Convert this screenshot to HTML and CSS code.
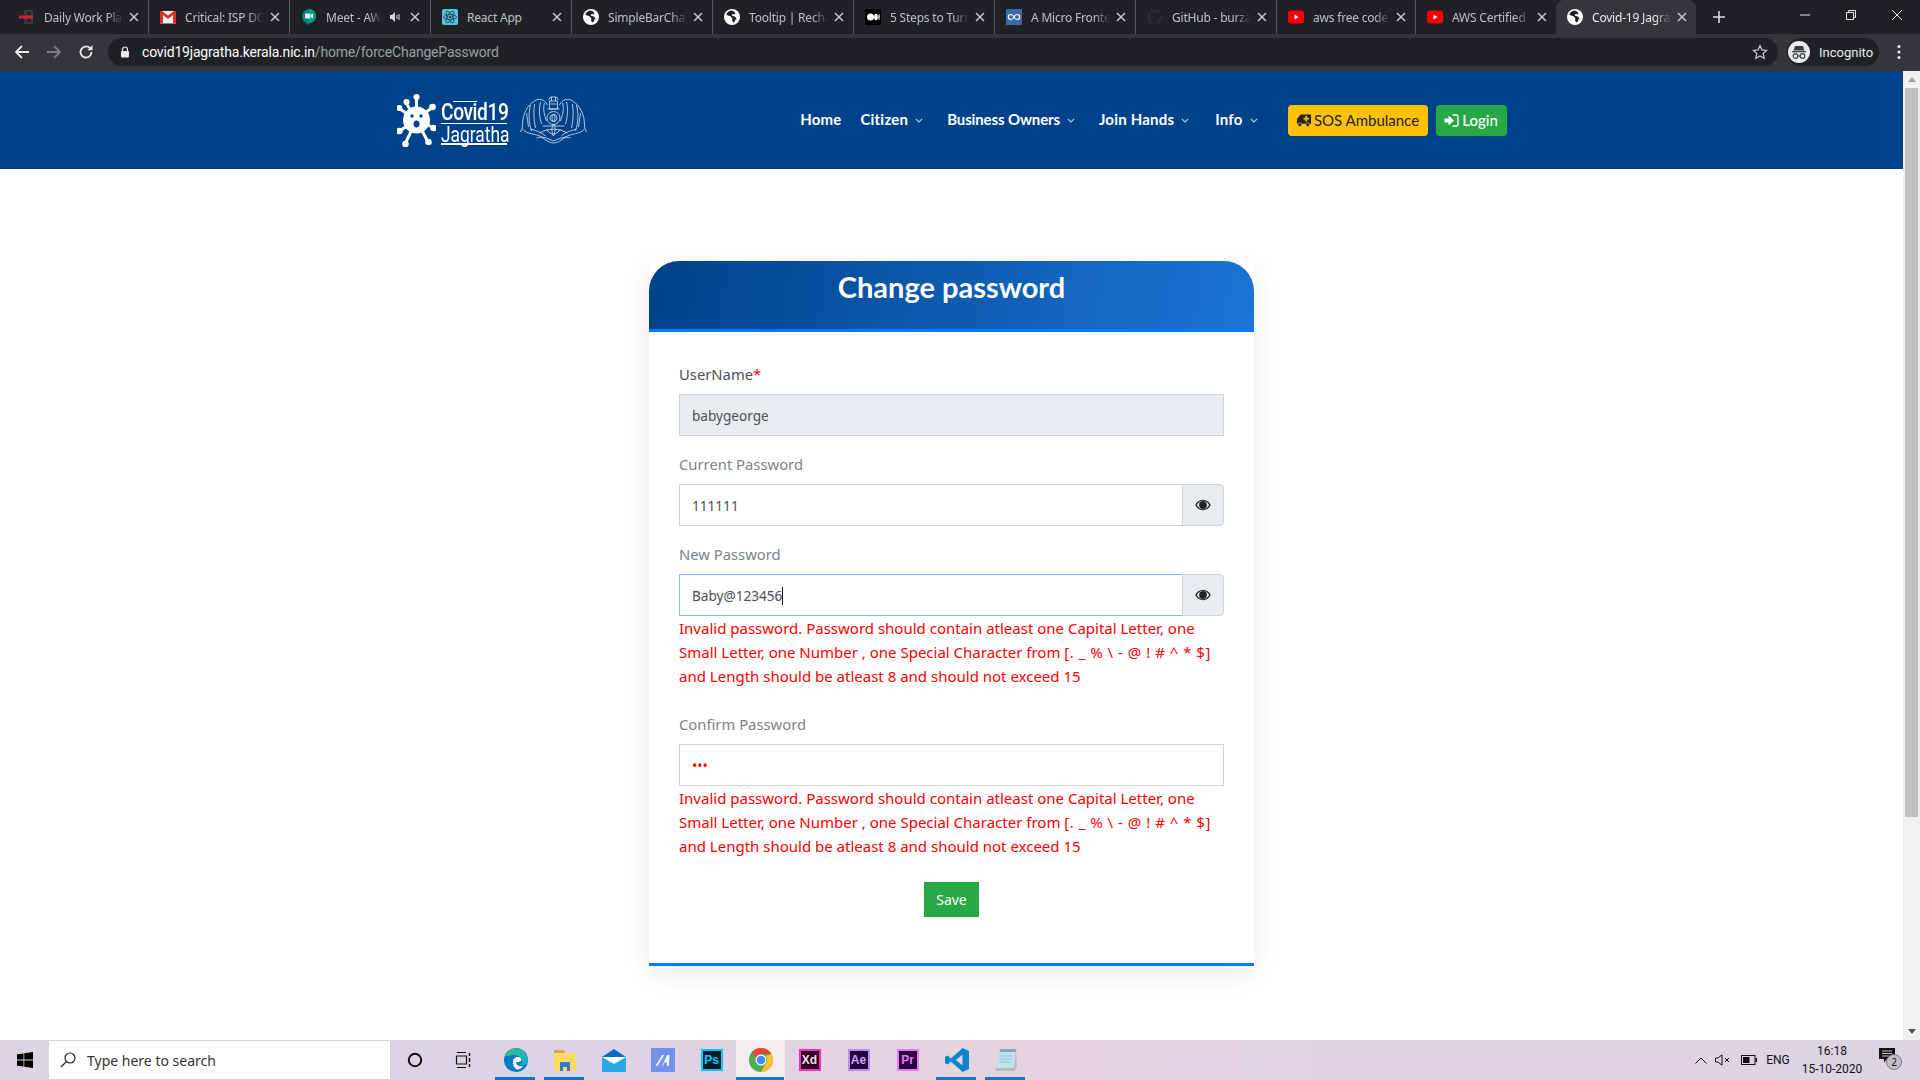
FILE: index.html
```html
<!DOCTYPE html>
<html lang="en">
<head>
<meta charset="utf-8">
<title>Covid-19 Jagratha</title>
<link rel="stylesheet" href="styles.css">
</head>
<body>
<svg class="defs" width="0" height="0" aria-hidden="true">
  <symbol id="x" viewBox="0 0 10 10"><path d="M1 1l8 8M9 1l-8 8" stroke="currentColor" stroke-width="1.5" fill="none"/></symbol>
  <symbol id="globe" viewBox="0 0 16 16"><circle cx="8" cy="8" r="8" fill="#fff"/><path d="M7 1.5C5 2 3 3.5 2.2 5.5l2.3 1.3 2 .2.7 1.6 1.3.4-.5 2 1 2.6 1.4-.6 1.2-2.4 1-1.2-1.8-2-2.6-.6-.6-1 1.3-.8 1.5.5 1-1.2C10.5 2.3 8.800 1.500 7 1.500z" fill="#202124"/></symbol>
  <symbol id="yt" viewBox="0 0 16 16"><rect y="1.500" width="16" height="13" rx="3" fill="#f00"/><path d="M6.500 5.500v5l4-2.500z" fill="#fff"/></symbol>
  <symbol id="eye" viewBox="0 0 16 12"><path d="M8 .8C4.500.8 1.600 3 .3 6c1.300 3 4.200 5.200 7.700 5.200S14.400 9 15.700 6C14.400 3 11.500.8 8 .8zm0 9.400C5.300 10.200 3.100 8.600 1.900 6 3.100 3.400 5.300 1.800 8 1.800s4.900 1.600 6.100 4.200c-1.200 2.600-3.400 4.200-6.100 4.200z" fill="#212529"/><circle cx="8" cy="6" r="3.900" fill="#212529"/></symbol>
</svg>

<div class="tabstrip">
  <div class="tab"><svg class="fav" viewBox="0 0 16 16"><path d="M5 1h9v14H5zM8 3v3h4V3zM8 10v3h4v-3z" fill="#3a3a3c"/><rect y="6.500" width="14" height="3" fill="#d3232a"/></svg><span class="tab-title">Daily Work Plan</span><svg class="tab-x"><use href="#x"/></svg></div>
  <div class="tab"><svg class="fav" viewBox="0 0 16 16"><rect y="2" width="16" height="12.500" fill="#eee"/><path d="M0 2v12.500h3V6l5 4 5-4v8.500h3V2h-2L8 6.500 2 2z" fill="#d93025"/></svg><span class="tab-title">Critical: ISP DOWN</span><svg class="tab-x"><use href="#x"/></svg></div>
  <div class="tab"><svg class="fav" viewBox="0 0 16 16"><path d="M8 0a7 7 0 0 0-7 7c0 4 3 7 7 9v-2a7 7 0 0 0 0-14z" fill="#00897b"/><path d="M8 0a7 7 0 0 1 0 14z" fill="#00a08f"/><rect x="4" y="4.500" width="5.500" height="5" rx="1" fill="#e8f5f3"/><path d="M10 6l2-1.500v5L10 8z" fill="#e8f5f3"/></svg><span class="tab-title tab-short">Meet - AWS</span><svg class="tab-audio" viewBox="0 0 12 12"><path d="M1 4h2l3-3v10L3 8H1z" fill="#dadce0"/><path d="M8 4v4M10 3v6" stroke="#dadce0" stroke-width="1"/></svg><svg class="tab-x tab-x-tight"><use href="#x"/></svg></div>
  <div class="tab"><svg class="fav" viewBox="0 0 16 16"><rect width="16" height="16" rx="2" fill="#59c4dc"/><g fill="none" stroke="#173f4c" stroke-width=".8"><ellipse cx="8" cy="8" rx="6.500" ry="2.600"/><ellipse cx="8" cy="8" rx="6.500" ry="2.600" transform="rotate(60 8 8)"/><ellipse cx="8" cy="8" rx="6.500" ry="2.600" transform="rotate(120 8 8)"/></g><circle cx="8" cy="8" r="1.300" fill="#173f4c"/></svg><span class="tab-title tab-nofade">React App</span><svg class="tab-x"><use href="#x"/></svg></div>
  <div class="tab"><svg class="fav"><use href="#globe"/></svg><span class="tab-title">SimpleBarChart</span><svg class="tab-x"><use href="#x"/></svg></div>
  <div class="tab"><svg class="fav"><use href="#globe"/></svg><span class="tab-title">Tooltip | Recharts</span><svg class="tab-x"><use href="#x"/></svg></div>
  <div class="tab"><svg class="fav" viewBox="0 0 16 16"><rect width="16" height="16" rx="1" fill="#000"/><circle cx="5.500" cy="8" r="3.500" fill="#fff"/><ellipse cx="11" cy="8" rx="1.800" ry="3.300" fill="#fff"/><ellipse cx="14" cy="8" rx=".7" ry="3" fill="#fff"/></svg><span class="tab-title">5 Steps to Turn</span><svg class="tab-x"><use href="#x"/></svg></div>
  <div class="tab"><svg class="fav" viewBox="0 0 16 16"><rect width="16" height="16" fill="#3b6aa8"/><path d="M8 8C7 6 6 5.500 4.800 5.500a2.500 2.500 0 0 0 0 5C6 10.500 7 10 8 8c1-2 2-2.500 3.200-2.500a2.500 2.500 0 0 1 0 5C10 10.500 9 10 8 8z" fill="none" stroke="#fff" stroke-width="1.200"/></svg><span class="tab-title">A Micro Frontend</span><svg class="tab-x"><use href="#x"/></svg></div>
  <div class="tab"><svg class="fav" viewBox="0 0 16 16"><path d="M8 .5a8 8 0 0 0-2.500 15.500c.4 0 .5-.2.5-.4v-2c-2.200.5-2.700-1-2.700-1-.4-.9-.9-1.200-.9-1.200-.7-.5 0-.5 0-.5.800 0 1.200.8 1.200.8.700 1.200 1.900.9 2.400.7 0-.5.300-.9.500-1.100-1.800-.2-3.600-.9-3.600-4 0-.9.300-1.600.8-2.100 0-.2-.4-1 .1-2.100 0 0 .7-.2 2.200.8a7.500 7.500 0 0 1 4 0c1.500-1 2.200-.8 2.200-.8.500 1.100.1 1.900.1 2.100.5.500.8 1.200.8 2.100 0 3.100-1.900 3.800-3.700 4 .3.300.6.700.6 1.500v2.200c0 .2.100.4.500.4A8 8 0 0 0 8 .5z" fill="#2b2d30"/></svg><span class="tab-title">GitHub - burzaszsolt</span><svg class="tab-x"><use href="#x"/></svg></div>
  <div class="tab tab-narrow"><svg class="fav"><use href="#yt"/></svg><span class="tab-title">aws free code camp</span><svg class="tab-x"><use href="#x"/></svg></div>
  <div class="tab tab-last"><svg class="fav"><use href="#yt"/></svg><span class="tab-title">AWS Certified</span><svg class="tab-x"><use href="#x"/></svg></div>
  <div class="tab tab-active"><svg class="fav"><use href="#globe"/></svg><span class="tab-title">Covid-19 Jagratha</span><svg class="tab-x"><use href="#x"/></svg></div>
  <svg class="new-tab" viewBox="0 0 12 12"><path d="M6 0v12M0 6h12" stroke="#dadce0" stroke-width="1.600"/></svg>
  <div class="win-controls">
    <svg class="win-btn" viewBox="0 0 12 12"><path d="M1 6h10" stroke="#e8eaed"/></svg>
    <svg class="win-btn" viewBox="0 0 12 12"><path d="M1.500 3.500h7v7h-7zM3.500 3.500v-2h7v7h-2" fill="none" stroke="#e8eaed"/></svg>
    <svg class="win-btn" viewBox="0 0 12 12"><path d="M1 1l10 10M11 1L1 11" stroke="#e8eaed"/></svg>
  </div>
</div>

<div class="toolbar">
  <svg class="tool" viewBox="0 0 16 16"><path d="M15 8H2M8 2L2 8l6 6" fill="none" stroke="#e8eaed" stroke-width="1.800"/></svg>
  <svg class="tool tool-dim" viewBox="0 0 16 16"><path d="M1 8h13M8 2l6 6-6 6" fill="none" stroke="#7b7d80" stroke-width="1.800"/></svg>
  <svg class="tool" viewBox="0 0 16 16"><path d="M13.500 8a5.500 5.500 0 1 1-1.600-3.900" fill="none" stroke="#e8eaed" stroke-width="1.800"/><path d="M14.500 1v5.200H9.300z" fill="#e8eaed"/></svg>
  <div class="omnibox">
    <svg class="lock" viewBox="0 0 10 12"><path d="M2.500 5V3.500a2.500 2.500 0 0 1 5 0V5" fill="none" stroke="#e8eaed" stroke-width="1.200"/><rect x="1" y="5" width="8" height="6.500" rx="1" fill="#e8eaed"/></svg>
    <span class="url"><span class="url-host">covid19jagratha.kerala.nic.in</span>/home/forceChangePassword</span>
    <svg class="star" viewBox="0 0 16 16"><path d="M8 1.500l2 4.400 4.700.5-3.500 3.200 1 4.700L8 11.900l-4.200 2.400 1-4.700L1.300 6.400 6 5.900z" fill="none" stroke="#c4c7ca" stroke-width="1.300"/></svg>
  </div>
  <div class="incognito">
    <svg class="incog-ico" viewBox="0 0 22 22"><circle cx="11" cy="11" r="11" fill="#e8eaed"/><path d="M7 5h8l1.500 4.500h-11zM4 10h14v1.200H4z" fill="#3c4043"/><circle cx="7.500" cy="15" r="2.300" fill="none" stroke="#3c4043" stroke-width="1.200"/><circle cx="14.500" cy="15" r="2.300" fill="none" stroke="#3c4043" stroke-width="1.200"/><path d="M9.800 15h2.400" stroke="#3c4043"/></svg>
    <span>Incognito</span>
  </div>
  <svg class="menu-dots" viewBox="0 0 4 16"><circle cx="2" cy="2.500" r="1.500" fill="#e8eaed"/><circle cx="2" cy="8" r="1.500" fill="#e8eaed"/><circle cx="2" cy="13.500" r="1.500" fill="#e8eaed"/></svg>
</div>

<div class="viewport">
  <div class="page">
    <header class="site-header">
      <div class="site-inner">
        <div class="brand">
          <svg class="virus" viewBox="0 0 38 54">
            <g stroke="#fff" stroke-width="3" fill="#fff">
              <path d="M19 27V4M19 27l16-13M19 27l18 8M19 27l11 21M19 27L8 50M19 27L2 38M19 27L1 15M19 27L8 9"/>
              <circle cx="19" cy="4" r="1.600"/><circle cx="35" cy="14" r="1.800"/><circle cx="36" cy="35" r="1.800"/><circle cx="31" cy="49" r="1.800"/><circle cx="8" cy="51" r="1.800"/><circle cx="2" cy="38" r="1.800"/><circle cx="1.800" cy="15" r="1.600"/><circle cx="9" cy="9" r="1.600"/>
            </g>
            <circle cx="19" cy="27" r="13.500" fill="#fff"/>
            <circle cx="14.500" cy="23" r="1.700" fill="#004289"/><circle cx="23.500" cy="23" r="1.700" fill="#004289"/><ellipse cx="19" cy="31" rx="3" ry="3.600" fill="#004289"/>
          </svg>
          <div class="wordmark"><span class="word-top">Covid19</span><span class="word-bottom">Jagratha</span></div>
          <svg class="emblem" viewBox="0 0 66 48" fill="none" stroke="#dfe7f2" stroke-width=".8">
            <path d="M29 5h8v8h-8zM27 13h12M28 4l2-3h6l2 3M31 1v4M35 1v4M30 8h6"/>
            <circle cx="33" cy="22" r="6.500"/><circle cx="33" cy="22" r="3.500"/><path d="M33 18c-2 3-2 5 0 8 2-3 2-5 0-8zM33 28c-3 5-1 10 0 12 1-2 3-7 0-12z"/>
            <path d="M27 9c-3-6-9-7-13-4C7 9 2 18 2 29c0 3-1 5-2 7M39 9c3-6 9-7 13-4 7 4 12 13 12 24 0 3 1 5 2 7"/>
            <path d="M24 7c-2 6 0 12 2 18M42 7c2 6 0 12-2 18M20 6c-2 8-1 15 1 22M46 6c2 8 1 15-1 22M10 9c-2 8-2 17 1 26M56 9c2 8 2 17-1 26M14 8c-1 8-1 15 1 24M52 8c1 8 1 15-1 24M6 17l2 14M60 17l-2 14"/>
            <path d="M2 33c5 6 13 4 19 8 4 3 8 6 12 6s8-3 12-6c6-4 14-2 19-8M10 33c6 2 11 3 15 7M56 33c-6 2-11 3-15 7M22 30h22M19 37c9-5 19-5 28 0M16 42c6-2 10 0 17 3 7-3 11-5 17-3M26 33c2 3 4 5 7 5s5-2 7-5"/>
          </svg>
        </div>
        <nav class="nav">
          <a class="nav-link nav-home">Home</a>
          <a class="nav-link nav-citizen">Citizen<svg class="caret" viewBox="0 0 8 5"><path d="M.8.8L4 4 7.200.8" fill="none" stroke="#b8c6d9" stroke-width="1.200"/></svg></a>
          <a class="nav-link nav-business">Business Owners<svg class="caret" viewBox="0 0 8 5"><path d="M.8.8L4 4 7.200.8" fill="none" stroke="#b8c6d9" stroke-width="1.200"/></svg></a>
          <a class="nav-link nav-join">Join Hands<svg class="caret" viewBox="0 0 8 5"><path d="M.8.8L4 4 7.200.8" fill="none" stroke="#b8c6d9" stroke-width="1.200"/></svg></a>
          <a class="nav-link nav-info">Info<svg class="caret" viewBox="0 0 8 5"><path d="M.8.8L4 4 7.200.8" fill="none" stroke="#b8c6d9" stroke-width="1.200"/></svg></a>
        </nav>
        <a class="btn btn-sos"><svg class="btn-ico" viewBox="0 0 16 13"><path d="M5 0h11v10H1V5z" fill="#212529"/><circle cx="4" cy="11" r="2" fill="#212529" stroke="#ffc107" stroke-width=".7"/><circle cx="12.500" cy="11" r="2" fill="#212529" stroke="#ffc107" stroke-width=".7"/><path d="M11 1.500v6M8 4.500h6" stroke="#ffc107" stroke-width="1.800"/></svg>SOS Ambulance</a>
        <a class="btn btn-login"><svg class="btn-ico" viewBox="0 0 14 13"><path d="M0 4.500h4V1.500L9.500 6.500 4 11.500V8.500H0z" fill="#fff"/><path d="M8 1h4a1.500 1.500 0 0 1 1.500 1.500v8A1.500 1.500 0 0 1 12 12H8" fill="none" stroke="#fff" stroke-width="1.300"/></svg>Login</a>
      </div>
    </header>

    <main class="content">
      <section class="card">
        <h1 class="card-title">Change password</h1>
        <form class="card-body">
          <div class="group">
            <label class="label label-dark">UserName<span class="req">*</span></label>
            <div class="control control-disabled">babygeorge</div>
          </div>
          <div class="group">
            <label class="label">Current Password</label>
            <div class="input-group">
              <div class="control">111111</div>
              <div class="addon"><svg class="eye"><use href="#eye"/></svg></div>
            </div>
          </div>
          <div class="group">
            <label class="label">New Password</label>
            <div class="input-group">
              <div class="control control-focus">Baby@123456<span class="text-caret"></span></div>
              <div class="addon"><svg class="eye"><use href="#eye"/></svg></div>
            </div>
            <p class="error">Invalid password. Password should contain atleast one Capital Letter, one Small Letter, one Number , one Special Character from <span class="symbols">[. _ % \ - @ ! # ^ * $]</span> and Length should be atleast 8 and should not exceed 15</p>
          </div>
          <div class="group">
            <label class="label">Confirm Password</label>
            <div class="control control-dots">•••</div>
            <p class="error">Invalid password. Password should contain atleast one Capital Letter, one Small Letter, one Number , one Special Character from <span class="symbols">[. _ % \ - @ ! # ^ * $]</span> and Length should be atleast 8 and should not exceed 15</p>
          </div>
          <div class="actions"><a class="btn-save">Save</a></div>
        </form>
      </section>
    </main>
  </div>
  <div class="scrollbar">
    <span class="scroll-arrow"></span>
    <div class="scroll-track"><div class="scroll-thumb"></div></div>
    <span class="scroll-arrow scroll-arrow-down"></span>
  </div>
</div>

<footer class="taskbar">
  <div class="start"><svg class="start-ico" viewBox="0 0 16 16"><path d="M0 2.300l6.500-.9v6.200H0zM7.300 1.300L16 0v7.600H7.300zM0 8.400h6.500v6.200L0 13.700zM7.300 8.400H16V16l-8.700-1.300z" fill="#000"/></svg></div>
  <div class="search"><svg class="search-ico" viewBox="0 0 16 16"><circle cx="10" cy="6" r="5" fill="none" stroke="#222" stroke-width="1.200"/><path d="M6.300 9.700L1 15" stroke="#222" stroke-width="1.200"/></svg><span>Type here to search</span></div>
  <div class="sys-btn"><svg class="sys-ico" viewBox="0 0 16 16"><circle cx="8" cy="8" r="6.200" fill="none" stroke="#111" stroke-width="2"/></svg></div>
  <div class="sys-btn sys-btn-end"><svg class="sys-ico" viewBox="0 0 16 16"><path d="M2 .5h9M2 15.500h9M1.500 4h10v8h-10z" fill="none" stroke="#111" stroke-width="1.200"/><path d="M14.500 1v3M14.500 6v4M14.500 12v3" stroke="#111" stroke-width="1.400"/></svg></div>

  <div class="app app-run"><svg class="app-ico" viewBox="0 0 24 24"><defs><linearGradient id="edgeA" x1="0" y1="0" x2="1" y2="1"><stop offset="0" stop-color="#33c481"/><stop offset="1" stop-color="#1fa8d8"/></linearGradient></defs><circle cx="12" cy="12" r="12" fill="#0b7cc9"/><path d="M1 8C4 1 11-1 16 1c5 2 8 7 8 12 0 2-2 4-5 4h-3c2-1 3-3 2-5-1-3-4-5-8-5-4 0-7 2-9 1z" fill="url(#edgeA)"/><path d="M9 14c0-3 2-5 5-5s4 3 3 4c-1 1-3 1-5 1 0 3 3 5 7 4-2 3-5 4-7 3-2-2-3-4-3-7z" fill="#fff"/></svg></div>
  <div class="app app-run"><svg class="app-ico" viewBox="0 0 24 24"><path d="M1 2h9l2 2h0v3H1z" fill="#e0a33b"/><rect x="1" y="5" width="22" height="18" fill="#ffd966"/><path d="M7 14h10v9h-3v-4h-4v4H7z" fill="#2b7cc9"/></svg></div>
  <div class="app"><svg class="app-ico" viewBox="0 0 24 24"><path d="M0 9L12 1l12 8v15H0z" fill="#0f6cbd"/><path d="M0 9h24v15H0z" fill="#29a8ea"/><path d="M0 9h24l-12 7z" fill="#fff"/></svg></div>
  <div class="app"><div class="tile tile-blue"><svg class="tile-ico" viewBox="0 0 24 24"><path d="M3 19L11 6h2.500L5.500 19zM11 19l6-13h3l-1 13h-2.600l.4-4h-3l-1.800 4z" fill="#fff" opacity=".9"/></svg></div></div>
  <div class="app"><div class="badge badge-ps">Ps</div></div>
  <div class="app app-active"><svg class="app-ico" viewBox="0 0 24 24"><circle cx="12" cy="12" r="12" fill="#4caf50"/><path d="M12 0a12 12 0 0 1 10.400 6H12a6 6 0 0 0-5.400 3.400L2.800 4.300A12 12 0 0 1 12 0z" fill="#ea4335"/><path d="M22.400 6A12 12 0 0 1 12 24l5.200-9A6 6 0 0 0 16.500 8z" fill="#fbc02d"/><circle cx="12" cy="12" r="5.500" fill="#fff"/><circle cx="12" cy="12" r="4.300" fill="#4a8af4"/></svg></div>
  <div class="app"><div class="badge badge-xd">Xd</div></div>
  <div class="app"><div class="badge badge-ae">Ae</div></div>
  <div class="app"><div class="badge badge-pr">Pr</div></div>
  <div class="app app-run"><svg class="app-ico" viewBox="0 0 24 24"><path d="M17.500 0L24 3v18l-6.500 3L6 13.500l-3.500 3L0 15V9l2.500-1.500 3.500 3zM17.500 6.500L11 12l6.500 5.500z" fill="#0a84d0"/></svg></div>
  <div class="app app-run"><svg class="app-ico" viewBox="0 0 24 24"><path d="M6 1h16l-2 19H1z" fill="#bfe3ec"/><path d="M6 1h16v3H5.500z" fill="#7fa9b8"/><path d="M20 20l2-19 1 18-3 4H2l-1-3z" fill="#b9bcbe"/><path d="M7 8h11M6 11h11M5 14h11" stroke="#98c5d2"/></svg></div>

  <div class="tray">
    <svg class="tray-ico tray-chev" viewBox="0 0 12 7"><path d="M.5 6.500L6 1l5.500 5.500" fill="none" stroke="#111"/></svg>
    <svg class="tray-ico" viewBox="0 0 16 12"><path d="M.5 4h2.500L7 .8v10.400L3 8H.5z" fill="none" stroke="#111"/><path d="M10 4l4 4M14 4l-4 4" stroke="#111"/></svg>
    <svg class="tray-ico tray-bat" viewBox="0 0 16 10"><rect x=".5" y=".5" width="13.500" height="9" fill="none" stroke="#111"/><rect x="2" y="2" width="6.500" height="6" fill="#111"/><rect x="14.500" y="3" width="1.500" height="4" fill="#111"/></svg>
    <span class="tray-lang">ENG</span>
    <div class="clock"><span>16:18</span><span>15-10-2020</span></div>
    <div class="notify">
      <svg class="notify-ico" viewBox="0 0 16 15"><path d="M0 0h16v11H8l-3 3.500V11H0z" fill="#111"/><path d="M3 3h10M3 5.500h10M3 8h7" stroke="#e0d5e3" stroke-width=".9"/></svg>
      <span class="notify-badge">2</span>
    </div>
  </div>
</footer>
</body>
</html>
```
FILE: styles.css
```css
* { box-sizing: border-box; }
html, body { margin: 0; height: 100%; overflow: hidden; }
body { display: flex; flex-direction: column; width: 1920px; height: 1080px; font-family: "Noto Sans", "Open Sans", sans-serif; background: #fff; }
.defs { position: absolute; }

/* Chrome tab strip */
.tabstrip { height: 34px; flex: none; display: flex; align-items: flex-end; background: #202124; padding-left: 8px; color: #bdc1c6; font-size: 12px; letter-spacing: -.2px; }
.tab { position: relative; width: 141px; height: 34px; flex: none; display: flex; align-items: center; padding: 0 9px 0 11px; border-right: 1px solid #54565a; background: transparent; }
.tab-narrow { width: 139px; }
.tab-last { width: 140px; border-right: 0; }
.tab-active { width: 140px; background: #35363a; color: #e8eaed; border-right: 0; border-radius: 8px 8px 0 0; }
.fav { width: 16px; height: 16px; flex: none; margin-right: 9px; }
.tab-title { flex: 1; min-width: 0; white-space: nowrap; overflow: hidden; -webkit-mask-image: linear-gradient(to right, #000 80%, transparent 100%); mask-image: linear-gradient(to right, #000 80%, transparent 100%); }
.tab-nofade { -webkit-mask-image: none; mask-image: none; }
.tab-short { flex: 0 0 55px; }
.tab-audio { width: 12px; height: 12px; flex: none; margin-left: 8px; }
.tab-x { width: 10px; height: 10px; flex: none; margin-left: 6px; color: #c5c8cc; }
.tab-x-tight { margin-left: 9px; }
.new-tab { width: 12px; height: 12px; margin: 0 0 11px 17px; flex: none; }
.win-controls { margin-left: auto; display: flex; align-self: flex-start; padding: 9px 17px 0 0; gap: 34px; }
.win-btn { width: 12px; height: 12px; }

/* Chrome toolbar */
.toolbar { height: 37px; flex: none; background: #35363a; display: flex; align-items: center; padding: 0 0 1px 14px; }
.tool { width: 16px; height: 16px; flex: none; margin-right: 16px; }
.omnibox { width: 1670px; height: 28px; margin-left: -2px; border-radius: 14px; background: #202124; display: flex; align-items: center; padding: 0 10px 0 12px; font-family: "Roboto", sans-serif; font-size: 14px; letter-spacing: -.18px; flex: none; }
.lock { width: 10px; height: 12px; margin-right: 12px; flex: none; }
.url { color: #9aa0a6; white-space: nowrap; }
.url-host { color: #fff; }
.star { width: 16px; height: 16px; margin-left: auto; }
.incognito { width: 92px; height: 28px; margin-left: 9px; border-radius: 14px; background: #202124; display: flex; align-items: center; gap: 9px; padding-left: 1px; color: #e8eaed; font-family: "Roboto", sans-serif; font-size: 13px; flex: none; }
.incog-ico { width: 22px; height: 22px; flex: none; }
.menu-dots { width: 4px; height: 16px; margin-left: 18px; flex: none; }

/* Page */
.viewport { flex: 1; min-height: 0; display: flex; }
.page { flex: 1; min-width: 0; overflow: hidden; }
.site-header { height: 98px; background: #004289; }
.site-inner { width: 1140px; height: 100%; margin: 0 auto; padding: 0 15px; display: flex; align-items: center; }
.brand { display: flex; align-items: center; flex: none; }
.virus { width: 39px; height: 54px; flex: none; }
.wordmark { width: 66px; height: 48px; margin: 2px 0 0 5px; padding-top: 5px; flex: none; display: flex; flex-direction: column; color: #fff; font-family: "Roboto", sans-serif; line-height: 21px; border-bottom: 2px solid #fff; background: linear-gradient(#fff, #fff) no-repeat 12px 4px / 24px 1px, linear-gradient(#fff, #fff) no-repeat 0 26px / 100% 1px; }
.word-top, .word-bottom { display: block; white-space: nowrap; transform-origin: 0 0; }
.word-top { font-size: 24px; font-weight: 500; letter-spacing: -.5px; transform: scaleX(.8); }
.word-bottom { font-size: 22px; transform: scaleX(.79); margin-top: 1px; }
.emblem { width: 69px; height: 48px; margin-left: 12px; flex: none; }

.nav { margin-left: auto; display: flex; align-items: center; font-family: "Lato", sans-serif; font-size: 15px; font-weight: 700; color: #fff; letter-spacing: .2px; margin-top: -3px; }
.nav-link { display: flex; align-items: center; white-space: nowrap; }
.nav-home { margin-right: 19px; }
.nav-citizen { margin-right: 24px; }
.nav-business { margin-right: 24px; letter-spacing: -.13px; }
.nav-join { margin-right: 26px; }
.nav-info { margin-right: 30px; }
.caret { width: 8px; height: 5px; margin-left: 7px; margin-top: 3px; }
.btn { height: 31px; border-radius: 4px; display: flex; align-items: center; justify-content: center; font-family: "Lato", sans-serif; font-size: 15px; flex: none; }
.btn-sos { width: 140px; background: #ffc107; color: #212529; }
.btn-login { width: 71px; margin-left: 8px; background: #28a745; color: #fff; font-weight: 500; }
.btn-ico { width: 15px; height: 13px; margin-right: 3px; flex: none; }

.content { padding-top: 92px; }
.card { width: 605px; margin: 0 auto; background: #fff; border-bottom: 3px solid #007bff; box-shadow: 0 8px 24px rgba(0, 0, 0, .09); }
.card-title { margin: 0; height: 71px; padding-top: 5px; border-bottom: 3px solid #007bff; border-radius: 30px 30px 0 0; background: linear-gradient(100deg, #004289 0%, #1b74d6 100%); color: #fff; text-align: center; font-family: "Lato", sans-serif; font-size: 29px; font-weight: 700; line-height: 42px; }
.card-body { display: block; margin: 0; padding: 30px 30px 46px; }
.group { margin-bottom: 16px; }
.label { display: block; height: 24px; margin-bottom: 8px; font-size: 14.800px; line-height: 24px; color: #7b838b; }
.label-dark { color: #495057; }
.req { color: #f00; }
.control { height: 42px; flex: 1; padding: 1px 12px 0; border: 1px solid #ced4da; background: #fff; color: #495057; font-size: 13.600px; line-height: 40px; }
.control-disabled { background: #e9ecef; }
.control-focus { border-color: #80bdff; }
.control-dots { color: #f00; font-size: 14px; }
.text-caret { display: inline-block; width: 1px; height: 18px; background: #111; vertical-align: -4px; }
.input-group { display: flex; }
.addon { width: 42px; height: 42px; margin-left: -1px; flex: none; display: flex; align-items: center; justify-content: center; background: #e9ecef; border: 1px solid #ced4da; border-radius: 0 4px 4px 0; }
.eye { width: 16px; height: 12px; }
.error { margin: 0; padding-bottom: 8px; font-size: 15px; line-height: 24px; color: #f00; }
.symbols { letter-spacing: .5px; }
.actions { display: flex; justify-content: center; }
.btn-save { width: 55px; height: 35px; background: #28a745; color: #fff; font-size: 14px; line-height: 35px; text-align: center; }

/* Scrollbar */
.scrollbar { width: 17px; flex: none; display: flex; flex-direction: column; background: #f1f1f1; }
.scroll-arrow { height: 17px; flex: none; display: flex; align-items: center; justify-content: center; }
.scroll-arrow::before { content: ""; border: 4px solid transparent; border-top: 0; border-bottom: 5px solid #a3a3a3; }
.scroll-arrow-down::before { border-top: 5px solid #505050; border-bottom: 0; }
.scroll-track { flex: 1; min-height: 0; padding: 0 2px; }
.scroll-thumb { height: 729px; background: #c1c1c1; }

/* Windows taskbar */
.taskbar { height: 40px; flex: none; display: flex; align-items: stretch; background: linear-gradient(90deg, #dbd4e3 0%, #dcd3e4 30%, #e8d3df 55%, #dfd3e3 70%, #dcd3e3 100%); }
.start { width: 49px; display: flex; align-items: center; justify-content: center; flex: none; }
.start-ico { width: 16px; height: 16px; }
.search { width: 342px; flex: none; display: flex; align-items: center; padding-left: 11px; background: #fff; border: 1px solid #d3d0d8; border-width: 1px 1px 1px 0; color: #333; font-size: 14px; }
.search-ico { width: 16px; height: 16px; margin-right: 11px; flex: none; }
.sys-btn { width: 48px; flex: none; display: flex; align-items: center; justify-content: center; }
.sys-btn-end { margin-right: 4px; }
.sys-ico { width: 16px; height: 16px; }
.app { position: relative; width: 49px; flex: none; display: flex; align-items: center; justify-content: center; padding-bottom: 1px; }
.app-ico { width: 24px; height: 24px; }
.app-run::after, .app-active::after { content: ""; position: absolute; left: 4px; bottom: 0; width: 40px; height: 3px; background: #0078d7; }
.app-active { background: #f3edf2; }
.app-active::after { left: 0; width: 48px; }
.tile { width: 24px; height: 24px; display: flex; align-items: center; justify-content: center; }
.tile-blue { background: #7490ed; }
.tile-ico { width: 20px; height: 20px; }
.badge { width: 22px; height: 22px; display: flex; align-items: center; justify-content: center; font-family: "Liberation Sans", sans-serif; font-size: 12px; font-weight: 700; border: 2px solid; }
.badge-ps { background: #001d26; border-color: #00c8ff; color: #00c8ff; }
.badge-xd { background: #2e001f; border-color: #ff2bc2; color: #ffd9f0; }
.badge-ae { background: #1f0040; border-color: #c38bf0; color: #d8a1ff; }
.badge-pr { background: #2a0040; border-color: #e27bf5; color: #ea77ff; }
.tray { margin-left: auto; display: flex; align-items: center; color: #111; font-size: 12px; padding-right: 18px; }
.tray-ico { width: 16px; height: 12px; flex: none; margin-right: 10px; }
.tray-chev { width: 12px; height: 7px; margin-right: 8px; }
.tray-bat { height: 10px; margin-right: 9px; }
.tray-lang { width: 24px; margin-right: 7px; text-align: center; font-family: "Roboto", sans-serif; }
.clock { width: 70px; margin-right: 12px; display: flex; flex-direction: column; align-items: center; line-height: 18px; font-family: "Roboto", sans-serif; }
.notify { position: relative; width: 23px; height: 24px; display: flex; }
.notify-ico { width: 16px; height: 15px; }
.notify-badge { position: absolute; left: 7px; top: 6px; width: 16px; height: 16px; border-radius: 50%; background: #c3bdc6; border: 1px solid #777; font-size: 10px; line-height: 14px; text-align: center; }
```
